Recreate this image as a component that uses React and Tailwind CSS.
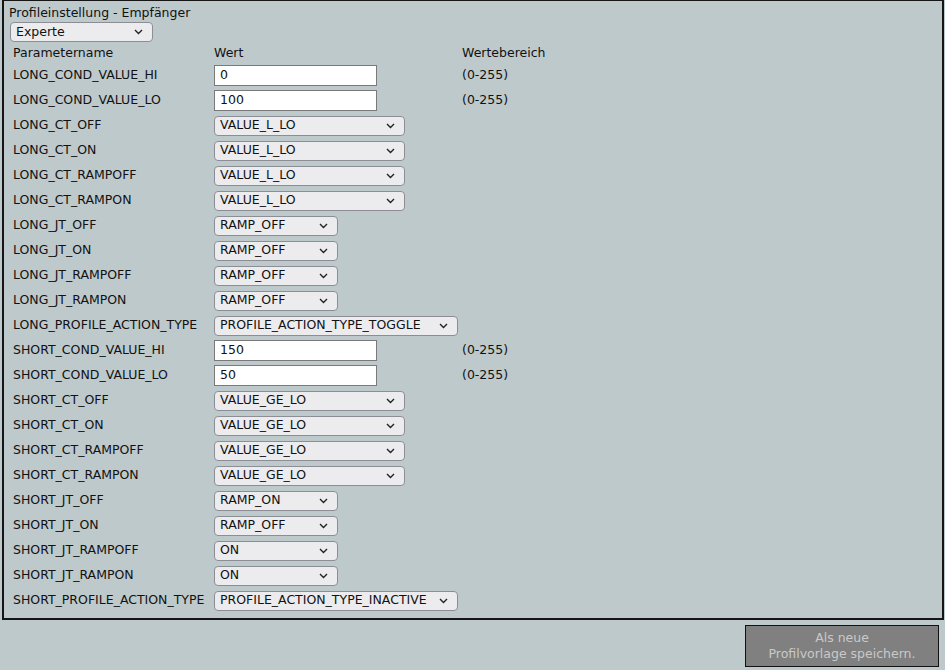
import React from 'react';

const rows = [
  { name: 'LONG_COND_VALUE_HI', type: 'input', value: '0', range: '(0-255)' },
  { name: 'LONG_COND_VALUE_LO', type: 'input', value: '100', range: '(0-255)' },
  { name: 'LONG_CT_OFF', type: 'select', value: 'VALUE_L_LO', w: 'w-[191px]' },
  { name: 'LONG_CT_ON', type: 'select', value: 'VALUE_L_LO', w: 'w-[191px]' },
  { name: 'LONG_CT_RAMPOFF', type: 'select', value: 'VALUE_L_LO', w: 'w-[191px]' },
  { name: 'LONG_CT_RAMPON', type: 'select', value: 'VALUE_L_LO', w: 'w-[191px]' },
  { name: 'LONG_JT_OFF', type: 'select', value: 'RAMP_OFF', w: 'w-[124px]' },
  { name: 'LONG_JT_ON', type: 'select', value: 'RAMP_OFF', w: 'w-[124px]' },
  { name: 'LONG_JT_RAMPOFF', type: 'select', value: 'RAMP_OFF', w: 'w-[124px]' },
  { name: 'LONG_JT_RAMPON', type: 'select', value: 'RAMP_OFF', w: 'w-[124px]' },
  { name: 'LONG_PROFILE_ACTION_TYPE', type: 'select', value: 'PROFILE_ACTION_TYPE_TOGGLE', w: 'w-[244px]' },
  { name: 'SHORT_COND_VALUE_HI', type: 'input', value: '150', range: '(0-255)' },
  { name: 'SHORT_COND_VALUE_LO', type: 'input', value: '50', range: '(0-255)' },
  { name: 'SHORT_CT_OFF', type: 'select', value: 'VALUE_GE_LO', w: 'w-[191px]' },
  { name: 'SHORT_CT_ON', type: 'select', value: 'VALUE_GE_LO', w: 'w-[191px]' },
  { name: 'SHORT_CT_RAMPOFF', type: 'select', value: 'VALUE_GE_LO', w: 'w-[191px]' },
  { name: 'SHORT_CT_RAMPON', type: 'select', value: 'VALUE_GE_LO', w: 'w-[191px]' },
  { name: 'SHORT_JT_OFF', type: 'select', value: 'RAMP_ON', w: 'w-[124px]' },
  { name: 'SHORT_JT_ON', type: 'select', value: 'RAMP_OFF', w: 'w-[124px]' },
  { name: 'SHORT_JT_RAMPOFF', type: 'select', value: 'ON', w: 'w-[124px]' },
  { name: 'SHORT_JT_RAMPON', type: 'select', value: 'ON', w: 'w-[124px]' },
  { name: 'SHORT_PROFILE_ACTION_TYPE', type: 'select', value: 'PROFILE_ACTION_TYPE_INACTIVE', w: 'w-[244px]' },
];

const Chevron = () => (
  <svg width="9" height="6" viewBox="0 0 9 6" className="shrink-0">
    <path d="M1 1 L4.5 4.5 L8 1" fill="none" stroke="#222" strokeWidth="1.4" />
  </svg>
);

const FakeSelect = ({ value, w }) => (
  <div className={`${w} h-[20px] flex items-center justify-between pl-[5px] pr-[9px] bg-[#ececef] border border-[#8d8d96] rounded-[4px] text-[#111]`}>
    <span className="whitespace-nowrap">{value}</span>
    <Chevron />
  </div>
);

export default function App() {
  return (
    <div className="w-[945px] h-[670px] bg-[#bec9cc] text-[12.5px] text-[#111] flex flex-col" style={{ fontFamily: '"DejaVu Sans", Verdana, sans-serif' }}>
      <div className="ml-[2px] mr-[1px] h-[620px] border-t border-l-2 border-r-2 border-b-2 border-[#151515] pl-[5px] pt-[3px] flex flex-col">
        <div className="leading-[17px]">Profileinstellung - Empfänger</div>
        <div className="ml-[1px] mt-[1px]">
          <FakeSelect value="Experte" w="w-[143px]" />
        </div>
        <div className="pl-[4px] mt-[2px] grid grid-cols-[201px_248px_auto]">
          <div className="h-[19px] flex items-center">Parametername</div>
          <div className="h-[19px] flex items-center">Wert</div>
          <div className="h-[19px] flex items-center">Wertebereich</div>
          {rows.map((r) => (
            <React.Fragment key={r.name}>
              <div className="h-[25px] flex items-center whitespace-nowrap">{r.name}</div>
              <div className="h-[25px] flex items-center">
                {r.type === 'input' ? (
                  <div className="w-[163px] h-[21px] flex items-center pl-[5px] bg-white border border-[#7a7a7a]">{r.value}</div>
                ) : (
                  <FakeSelect value={r.value} w={r.w} />
                )}
              </div>
              <div className="h-[25px] flex items-center">{r.range || ''}</div>
            </React.Fragment>
          ))}
        </div>
      </div>
      <div className="flex justify-end pr-[6px] pt-[5px]">
        <button className="w-[194px] h-[42px] bg-[#808080] border border-[#111] text-[#c9c9c9] text-[12.5px] leading-[16px] flex flex-col items-center justify-center">
          <span>Als neue</span>
          <span>Profilvorlage speichern.</span>
        </button>
      </div>
    </div>
  );
}
